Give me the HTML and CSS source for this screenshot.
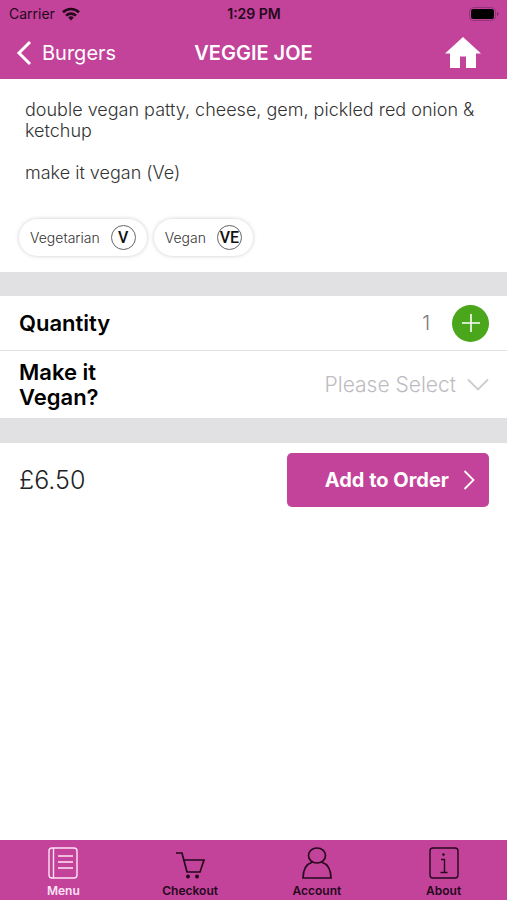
FILE: index.html
```html
<!DOCTYPE html>
<html lang="en">
<head>
<meta charset="utf-8">
<meta name="viewport" content="width=device-width, initial-scale=1">
<title>Veggie Joe</title>
<link rel="stylesheet" href="styles.css">
</head>
<body>
<header class="top">
  <div class="status">
    <span class="carrier">Carrier
      <svg width="18" height="14" viewBox="0 0 18 14" fill="none" stroke="currentColor" stroke-width="2.6"><path d="M1 5.2a11.5 11.5 0 0 1 16 0M4 8.6a7.2 7.2 0 0 1 10 0"/><path d="M9 13.4 6.2 10.6a4 4 0 0 1 5.6 0z" fill="currentColor" stroke="none"/></svg>
    </span>
    <span class="clock">1:29 PM</span>
    <svg class="battery" width="30" height="14" viewBox="0 0 30 14"><rect x=".5" y=".5" width="26" height="13" rx="4" fill="none" stroke="#96327a"/><rect x="2" y="2" width="23" height="10" rx="2.5"/><path d="M28 5v4q1.5-.6 1.5-2T28 5" fill="#7d2b62"/></svg>
  </div>
  <nav class="bar">
    <a class="back" href="#"><svg width="16" height="26" viewBox="0 0 16 26" fill="none" stroke="currentColor" stroke-width="3"><path d="M14 2 3 13l11 11"/></svg>Burgers</a>
    <h1 class="title">VEGGIE JOE</h1>
    <a class="home" href="#" aria-label="Home"><svg width="36" height="32" viewBox="0 0 36 32" fill="currentColor"><path d="M18 0 0 16.500h5V31h10V19.500h6V31h10V16.500h5z"/></svg></a>
  </nav>
</header>
<main class="main">
  <section class="details">
    <p class="text">double vegan patty, cheese, gem, pickled red onion &amp; ketchup</p>
    <p class="text">make it vegan (Ve)</p>
    <ul class="tags">
      <li class="tag">Vegetarian <span class="mark">V</span></li>
      <li class="tag">Vegan <span class="mark">VE</span></li>
    </ul>
  </section>
  <form class="options">
    <div class="row">
      <span class="label">Quantity</span>
      <output class="count">1</output>
      <button class="plus" type="button" aria-label="Increase quantity"><svg width="18" height="18" viewBox="0 0 18 18" fill="none" stroke="currentColor" stroke-width="1.6"><path d="M9 0v18M0 9h18"/></svg></button>
    </div>
    <div class="row choice">
      <label class="label" for="vegan">Make it Vegan?</label>
      <select class="select" id="vegan"><option>Please Select</option></select>
      <svg class="caret" width="22" height="14" viewBox="0 0 22 14" fill="none" stroke="currentColor" stroke-width="1.8"><path d="m1 1.500 10 10 10-10"/></svg>
    </div>
  </form>
  <section class="order">
    <span class="price">£6.50</span>
    <button class="add" type="button">Add to Order<svg width="12" height="20" viewBox="0 0 12 20" fill="none" stroke="currentColor" stroke-width="1.8"><path d="m1.500 1 9 9-9 9"/></svg></button>
  </section>
</main>
<nav class="tabs">
  <a class="tab active" href="#"><svg width="32" height="34" viewBox="0 0 32 34" fill="none" stroke="currentColor" stroke-width="1.400"><rect x="2" y="2" width="28" height="30" rx="3"/><path d="M6.500 2v30"/><path d="M11 10h15M11 16h15M11 22h15"/></svg>Menu</a>
  <a class="tab" href="#"><svg width="32" height="34" viewBox="0 0 32 34" fill="none" stroke="currentColor" stroke-width="1.700"><path d="M2 7h6l5 19h13l4-12H10"/><circle cx="14" cy="30.500" r="2" fill="currentColor" stroke="none"/><circle cx="23" cy="30.500" r="2" fill="currentColor" stroke="none"/></svg>Checkout</a>
  <a class="tab" href="#"><svg width="32" height="34" viewBox="0 0 32 34" fill="none" stroke="currentColor" stroke-width="1.700"><ellipse cx="16" cy="9.500" rx="8.500" ry="7.500"/><path d="M11.500 16C5.500 18 2 23 2 32h28c0-9-3.500-14-9.500-16"/></svg>Account</a>
  <a class="tab" href="#"><svg width="32" height="34" viewBox="0 0 32 34" fill="none" stroke="currentColor" stroke-width="1.400"><rect x="2" y="2" width="28" height="30" rx="3"/><path d="M13 13.500h3.500v13M12.500 26.500h7"/><circle cx="15.500" cy="8.500" r="1.300" fill="currentColor" stroke="none"/></svg>About</a>
</nav>
</body>
</html>
```
FILE: styles.css
```css
* {
  box-sizing: border-box;
}

body {
  margin: 0;
  min-height: 100vh;
  display: flex;
  flex-direction: column;
  background: #fff;
  color: #000;
  font-family: Inter, "Liberation Sans", sans-serif;
}

a {
  color: inherit;
  text-decoration: none;
}

svg {
  display: block;
  flex: none;
}

button {
  border: 0;
  padding: 0;
  font: inherit;
  color: #fff;
}

.top {
  background: #c3429a;
}

.status,
.bar {
  display: grid;
  grid-template-columns: 1fr auto 1fr;
  align-items: center;
}

.status {
  height: 27px;
  padding: 0 8px 0 9px;
  font-size: 14px;
  color: #24091c;
}

.carrier {
  display: flex;
  align-items: center;
  gap: 7px;
}

.clock {
  font-weight: 600;
}

.battery {
  justify-self: end;
}

.bar {
  height: 52px;
  padding: 0 16px;
  color: #fff;
}

.back {
  display: flex;
  align-items: center;
  gap: 10px;
  font-size: 20px;
}

.title {
  margin: 0;
  font-size: 20px;
  font-weight: 600;
}

.home {
  justify-self: end;
  margin-right: 10px;
}

.main {
  flex: 1;
}

.details {
  padding: 20px 19px 16px;
}

.text {
  margin: 0 0 21px 6px;
  font-size: 18px;
  line-height: 21px;
  font-weight: 300;
  color: #333;
}

.tags {
  display: flex;
  gap: 7px;
  margin: 36px 0 0;
  padding: 0;
  list-style: none;
}

.tag {
  display: flex;
  align-items: center;
  gap: 11px;
  height: 37px;
  padding: 0 11px;
  border-radius: 19px;
  box-shadow: 0 0 4px #ccc;
  font-size: 14px;
  font-weight: 300;
  color: #333;
}

.mark {
  display: flex;
  align-items: center;
  justify-content: center;
  width: 25px;
  height: 25px;
  border: 1px solid #666;
  border-radius: 50%;
  font-family: Roboto, sans-serif;
  font-size: 16px;
  font-weight: 500;
  color: #111;
}

.options {
  border-top: 24px solid #e1e1e3;
  border-bottom: 25px solid #e1e1e3;
}

.row {
  display: flex;
  align-items: center;
  min-height: 55px;
  padding: 0 18px 0 19px;
  border-bottom: 1px solid #e1e1e3;
}

.choice {
  min-height: 67px;
  border-bottom: 0;
}

.label {
  width: 110px;
  font-size: 22px;
  line-height: 25px;
  font-weight: 600;
}

.count {
  margin-left: auto;
  font-size: 20px;
  font-weight: 300;
  color: #777;
}

.plus {
  display: grid;
  place-items: center;
  width: 37px;
  height: 37px;
  margin-left: 22px;
  border-radius: 50%;
  background: #4aa61a;
}

.select {
  flex: 1;
  appearance: none;
  border: 0;
  padding: 0;
  background: none;
  font: inherit;
  font-size: 21px;
  font-weight: 300;
  color: #bcbcc0;
  text-align: right;
  text-align-last: right;
}

.caret {
  margin-left: 11px;
  color: #ccc;
}

.order {
  display: flex;
  align-items: center;
  justify-content: space-between;
  padding: 10px 18px 10px 19px;
}

.price {
  font-size: 25px;
  font-weight: 300;
  color: #222;
}

.add {
  display: flex;
  align-items: center;
  justify-content: flex-end;
  gap: 14px;
  width: 43%;
  height: 54px;
  padding-right: 14px;
  border-radius: 5px;
  background: #c3429a;
  font-size: 20px;
  font-weight: 700;
}

.tabs {
  display: grid;
  grid-template-columns: repeat(4, 1fr);
  height: 60px;
  background: #c3429a;
}

.tab {
  display: flex;
  flex-direction: column;
  align-items: center;
  padding-top: 6px;
  font-size: 12px;
  line-height: 22px;
  font-weight: 600;
  color: #24091c;
}

.active {
  color: #ffe3f6;
}
```
